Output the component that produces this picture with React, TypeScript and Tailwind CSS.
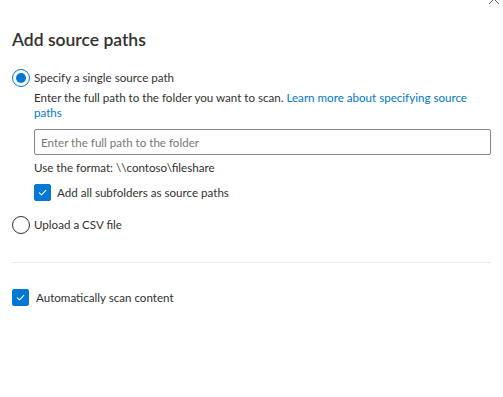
import { useState } from 'react';

const Radio = ({ checked, onClick }: { checked: boolean; onClick: () => void }) => (
  <span
    onClick={onClick}
    className={`flex h-[18px] w-[18px] shrink-0 cursor-pointer items-center justify-center rounded-full border ${
      checked ? 'border-[#0078d4]' : 'border-[#323130]'
    }`}
  >
    {checked && <span className="h-[10px] w-[10px] rounded-full bg-[#0078d4]" />}
  </span>
);

const Check = ({ checked, onClick }: { checked: boolean; onClick: () => void }) => (
  <span
    onClick={onClick}
    className={`flex h-[17px] w-[17px] shrink-0 cursor-pointer items-center justify-center rounded-[2px] border ${
      checked ? 'border-[#0078d4] bg-[#0078d4]' : 'border-[#323130] bg-white'
    }`}
  >
    {checked && (
      <svg width="11" height="11" viewBox="0 0 12 12" fill="none">
        <path d="M2.5 6.3 L5 8.6 L9.6 3.6" stroke="white" strokeWidth="1.1" strokeLinecap="round" strokeLinejoin="round" />
      </svg>
    )}
  </span>
);

const App = () => {
  const [mode, setMode] = useState<'single' | 'csv'>('single');
  const [subfolders, setSubfolders] = useState(true);
  const [autoScan, setAutoScan] = useState(true);
  const [path, setPath] = useState('');

  return (
    <div className="relative h-[397px] w-[503px] overflow-hidden bg-white font-[Lato,sans-serif] text-[#323130]">
      {/* close button, mostly scrolled off the top */}
      <button className="absolute right-[2px] top-[-8px] p-[1px] text-[#605e5c]">
        <svg width="12" height="12" viewBox="0 0 12 12">
          <path d="M1 1 L11 11 M11 1 L1 11" stroke="currentColor" strokeWidth="1" />
        </svg>
      </button>

      <div className="flex flex-col px-3 pt-[28px]">
        <h1 className="text-[17.5px] font-semibold leading-[24px]">Add source paths</h1>

        <div className="mt-[16px] flex h-[20px] items-center gap-[4px]">
          <Radio checked={mode === 'single'} onClick={() => setMode('single')} />
          <span className="text-[11.6px] leading-[20px]">Specify a single source path</span>
        </div>

        <div className="pl-[22px]">
          <p className="mt-[2px] text-[11.6px] leading-[15px]">
            Enter the full path to the folder you want to scan.{' '}
            <a className="text-[#0078d4]" href="#">
              Learn more about specifying source paths
            </a>
          </p>

          <input
            value={path}
            onChange={(e) => setPath(e.target.value)}
            placeholder="Enter the full path to the folder"
            className="mt-[9px] h-[26px] w-full rounded-[2px] border border-[#8a8886] px-[6px] text-[11.6px] outline-none placeholder:text-[#797775]"
          />

          <p className="mt-[5px] text-[11.6px] leading-[16px]">Use the format: \\contoso\fileshare</p>

          <div className="mt-[8px] flex items-center gap-[6px]">
            <Check checked={subfolders} onClick={() => setSubfolders(!subfolders)} />
            <span className="text-[11.6px] leading-[17px]">Add all subfolders as source paths</span>
          </div>
        </div>

        <div className="mt-[14px] flex h-[20px] items-center gap-[4px]">
          <Radio checked={mode === 'csv'} onClick={() => setMode('csv')} />
          <span className="text-[11.6px] leading-[20px]">Upload a CSV file</span>
        </div>

        <div className="mt-[27px] h-px w-full bg-[#edebe9]" />

        <div className="mt-[26px] flex items-center gap-[7px]">
          <Check checked={autoScan} onClick={() => setAutoScan(!autoScan)} />
          <span className="text-[11.6px] leading-[17px]">Automatically scan content</span>
        </div>
      </div>
    </div>
  );
};

export default App;
